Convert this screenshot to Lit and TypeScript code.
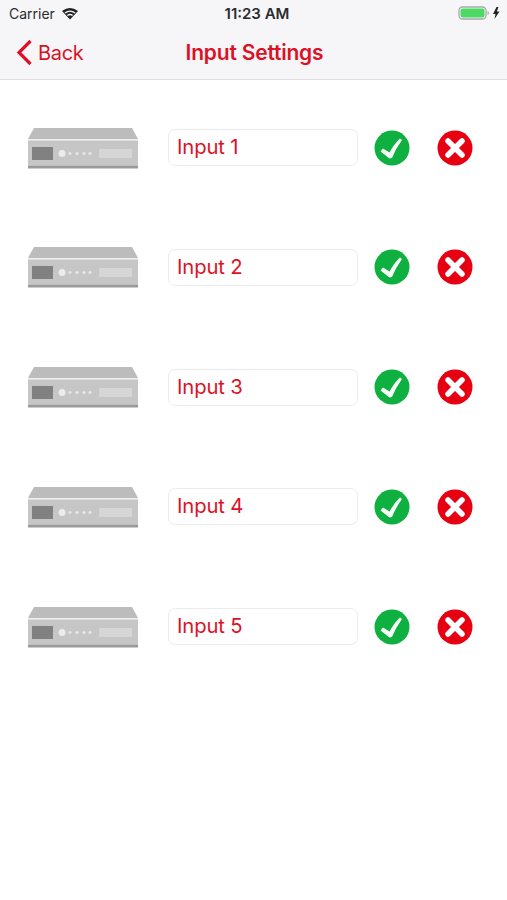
import { LitElement, html, css, svg } from "lit";
import { customElement } from "lit/decorators.js";

const device = svg`<svg class="device" width="112" height="44" viewBox="0 0 112 44">
  <polygon points="1,13 7,2 105,2 111,13" fill="#bcbcbc"/>
  <rect x="1" y="13" width="110" height="1.5" fill="#efefef"/>
  <rect x="1" y="14.5" width="110" height="25" fill="#c6c6c6"/>
  <rect x="1" y="39.5" width="110" height="3" fill="#9a9a9a"/>
  <rect x="5" y="21" width="21" height="13" fill="#818181"/>
  <circle cx="35" cy="27.500" r="3.500" fill="#ececec"/>
  <circle cx="43" cy="27.500" r="1.600" fill="#e6e6e6"/>
  <circle cx="50" cy="27.500" r="1.600" fill="#e6e6e6"/>
  <circle cx="57" cy="27.500" r="1.600" fill="#e6e6e6"/>
  <circle cx="63" cy="27.500" r="1.600" fill="#e6e6e6"/>
  <rect x="72" y="23" width="33" height="9" fill="#d6d6d6"/>
</svg>`;

const ok = svg`<svg width="36" height="36" viewBox="0 0 36 36">
  <circle cx="18" cy="18" r="17.500" fill="#0eb13f"/>
  <path d="M6.500 21.500 L9 18.500 L15.500 22.500 Q20 14 26 8.500 L28 10 Q22 18 18 28 L15.500 28.500 Z" fill="#f6fbf7"/>
</svg>`;

const no = svg`<svg width="36" height="36" viewBox="0 0 36 36">
  <circle cx="18" cy="18" r="17.500" fill="#e60012"/>
  <path d="M11 11 L25 25 M25 11 L11 25" stroke="#fff" stroke-width="5.500" stroke-linecap="round"/>
</svg>`;

@customElement("app-root")
export class AppRoot extends LitElement {
  static styles = css`
    :host { display: block; width: 507px; height: 900px; background: #fff; font-family: Inter, "Liberation Sans", sans-serif; overflow: hidden; }
    .head { height: 79px; background: #f6f6f8; border-bottom: 1px solid #dedee0; display: flex; flex-direction: column; }
    .status { height: 28px; box-sizing: border-box; display: grid; grid-template-columns: 1fr auto 1fr; align-items: center; padding: 0 6px 2px 9px; font-size: 14px; color: #2b2b2d; }
    .status .l { display: flex; align-items: center; gap: 6px; }
    .status .c { font-weight: 600; font-size: 15px; margin-left: 4px; }
    .status .r { display: flex; justify-content: flex-end; align-items: center; }
    .nav { flex: 1; display: grid; grid-template-columns: 1fr auto 1fr; align-items: center; padding: 0 16px 2px; color: #dd1126; }
    .back { display: flex; align-items: center; gap: 5px; font-size: 20px; letter-spacing: -.3px; }
    .title { font-weight: 600; font-size: 21px; letter-spacing: -.2px; margin-left: 2px; }
    .list { display: flex; flex-direction: column; gap: 82.800px; padding: 49px 0 0 27px; }
    .row { display: flex; align-items: center; height: 37px; }
    .device { margin-right: 29px; flex: none; }
    .input { width: 190px; height: 37px; box-sizing: border-box; border: 1px solid #ececee; border-radius: 7px; background: #fff; color: #dd1126; font-size: 20.300px; display: flex; align-items: center; padding: 0 8px 2px; margin-right: 16px; letter-spacing: -.15px; }
    .ok { margin-right: 27px; display: flex; }
    .no { display: flex; }
  `;
  render() {
    return html`
      <div class="head">
        <div class="status">
          <div class="l">Carrier
            <svg width="18" height="13" viewBox="0 0 17 13">
              <path d="M8.500 12.500 L0.500 4 Q8.500 -2 16.500 4 Z" fill="#222" />
              <path d="M3 5.500 Q8.500 1.500 14 5.500 L13 6.600 Q8.500 3.100 4 6.600 Z" fill="#f6f6f8"/>
              <path d="M5.400 8 Q8.500 5.700 11.600 8 L10.700 9 Q8.500 7.400 6.300 9 Z" fill="#f6f6f8"/>
            </svg>
          </div>
          <div class="c">11:23 AM</div>
          <div class="r">
            <svg width="43" height="14" viewBox="0 0 43 14">
              <rect x="1" y="1" width="27" height="12" rx="3.500" fill="none" stroke="#a9a9a9" stroke-width="1.300"/>
              <rect x="2.500" y="2.500" width="24" height="9" rx="2" fill="#4cd964"/>
              <path d="M29.500 5 Q31 5.500 31 7 Q31 8.500 29.500 9 Z" fill="#a9a9a9"/>
              <path d="M38.500 1 L35 8 L37.500 8 L36.500 13 L41.500 5.500 L38.800 5.500 L40.500 1 Z" fill="#222"/>
            </svg>
          </div>
        </div>
        <div class="nav">
          <div class="back">
            <svg width="17" height="27" viewBox="0 0 17 27"><path d="M14.500 2 L3 13.500 L14.500 25" fill="none" stroke="#dd1126" stroke-width="3.200"/></svg>
            Back
          </div>
          <div class="title">Input Settings</div>
          <div></div>
        </div>
      </div>
      <div class="list">
        ${[1, 2, 3, 4, 5].map(
          (n) => html`<div class="row">
            ${device}
            <div class="input">Input ${n}</div>
            <div class="ok">${ok}</div>
            <div class="no">${no}</div>
          </div>`
        )}
      </div>
    `;
  }
}
